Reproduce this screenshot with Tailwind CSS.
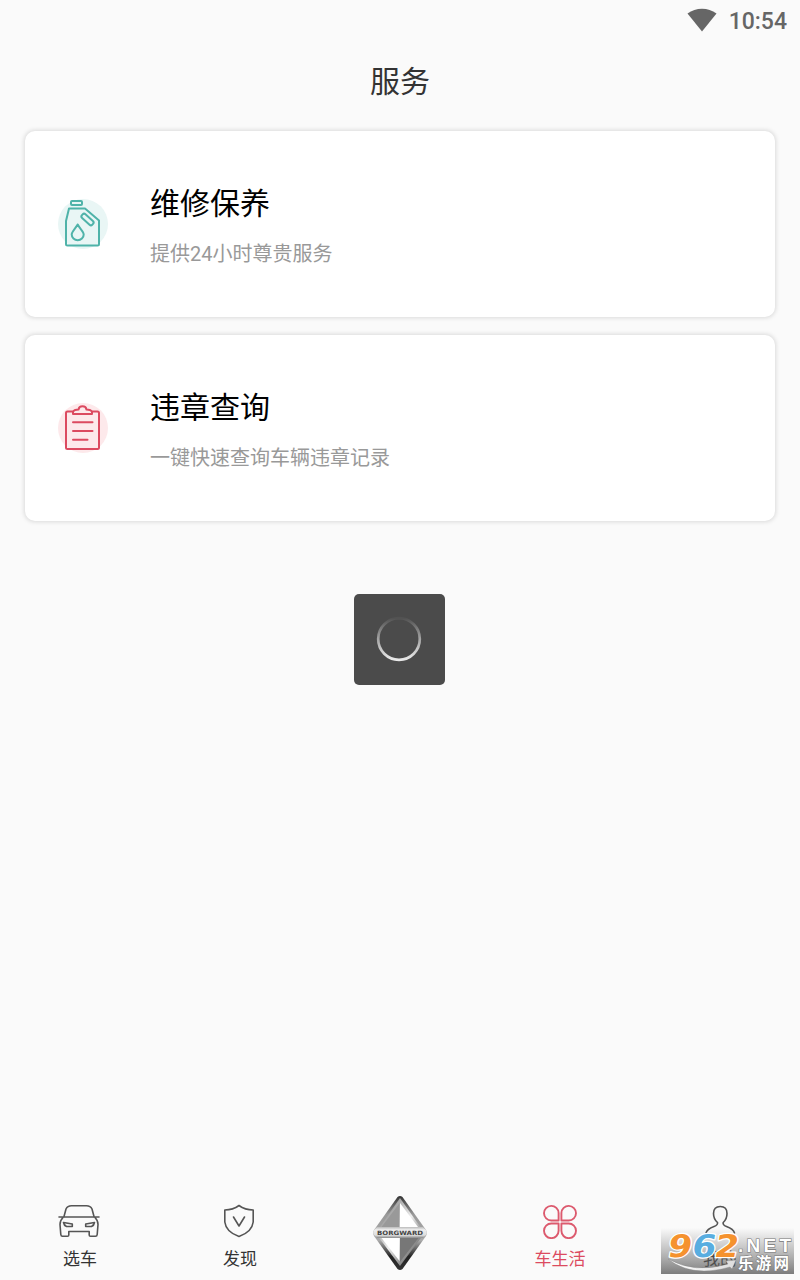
<!DOCTYPE html>
<html lang="zh-CN">
<head>
  <meta charset="UTF-8" />
  <meta name="viewport" content="width=device-width, initial-scale=1.0" />
  <title>服务</title>
  <script src="https://cdn.jsdelivr.net/npm/@tailwindcss/browser@4"></script>
</head>
<body class="bg-[#fafafa] font-[Roboto,'Noto_Sans_CJK_SC',sans-serif]">
  <div class="relative flex h-[1280px] w-[800px] flex-col overflow-hidden">

    <!-- Status bar -->
    <div class="flex h-[42px] items-center justify-end pr-[13px] text-[#666]">
      <svg class="mr-[12px] mb-[2px] h-6 w-[30px]" viewBox="0 0 30 24" fill="currentColor"><path d="M15 23.500L.5 5.500Q7 .8 15 .8T29.500 5.500z" /></svg>
      <span class="text-[23px] font-medium leading-none">10:54</span>
    </div>

    <h1 class="flex h-[78px] items-center justify-center text-[30px] text-[#333]">服务</h1>

    <main class="flex flex-col gap-[18px] px-[25px] pt-[11px]">
      <div class="flex h-[186px] items-center rounded-[10px] bg-white pl-[33px] shadow-[0_0_4px_1px_rgba(0,0,0,0.13)]">
        <svg class="h-[50px] w-[50px]" viewBox="0 0 50 50" fill="none" stroke="#4fb3a9" stroke-width="2" stroke-linejoin="round">
          <circle cx="25" cy="25" r="25" fill="#e9f6f5" stroke="none" />
          <rect x="13" y="2" width="11" height="4" rx="1" />
          <path d="M11 9.500H27L41 21.500V45Q41 46.500 39.500 46.500H9.500Q8 46.500 8 45V22z" />
          <rect x="-7" y="-2.500" width="14" height="5" rx="2" transform="translate(29.500 20.500) rotate(42)" />
          <path d="M19.700 25.500C17 30 13.700 32.500 13.700 35.500A6 5.700 0 0 0 25.700 35.500C25.700 32.500 22 30 19.700 25.500z" />
        </svg>
        <div class="ml-[42px] flex flex-col pt-[3px]">
          <h2 class="text-[30px] leading-[44px] text-black">维修保养</h2>
          <p class="mt-[13px] text-[20px] leading-[30px] text-[#999]">提供24小时尊贵服务</p>
        </div>
      </div>

      <div class="flex h-[186px] items-center rounded-[10px] bg-white pl-[33px] shadow-[0_0_4px_1px_rgba(0,0,0,0.13)]">
        <svg class="h-[50px] w-[50px]" viewBox="0 0 50 50" fill="none" stroke="#dc4a60" stroke-width="2" stroke-linejoin="round" stroke-linecap="round">
          <circle cx="25" cy="25" r="25" fill="#fde9eb" stroke="none" />
          <path d="M14.500 8.500H9.500Q8 8.500 8 10V44.500Q8 46 9.500 46H39.500Q41 46 41 44.500V10Q41 8.500 39.500 8.500H34.500" />
          <path d="M15 11H34V9Q33 6.500 28.500 6.500Q28 3.200 24.500 3.200T20.500 6.500Q16 6.500 15 9z" />
          <path d="M15 19.300H34.500M15 28H34.500M15 36.700H29.500" />
        </svg>
        <div class="ml-[42px] flex flex-col pt-[3px]">
          <h2 class="text-[30px] leading-[44px] text-black">违章查询</h2>
          <p class="mt-[13px] text-[20px] leading-[30px] text-[#999]">一键快速查询车辆违章记录</p>
        </div>
      </div>
    </main>

    <!-- Loading overlay -->
    <div class="absolute left-[354px] top-[594px] flex h-[91px] w-[91px] items-center justify-center rounded-[5px] bg-[#4b4b4b]">
      <svg class="mr-px mb-px h-[46px] w-[46px]" viewBox="0 0 46 46" fill="none">
        <defs>
          <linearGradient id="spin" x1="0" y1="0" x2="0" y2="1">
            <stop offset="0" stop-color="#fff" stop-opacity=".04" />
            <stop offset=".5" stop-color="#fff" stop-opacity=".5" />
            <stop offset="1" stop-color="#fff" stop-opacity=".88" />
          </linearGradient>
        </defs>
        <circle cx="23" cy="23" r="20.800" stroke="url(#spin)" stroke-width="2.700" />
      </svg>
    </div>

    <!-- Tab bar -->
    <nav class="mt-auto grid h-[90px] grid-cols-5 text-[17px] leading-[24px] text-[#333]">
      <a class="flex flex-col items-center pt-[14px]">
        <svg class="mr-[3px] h-[35px] w-[42px]" viewBox="0 0 42 35" fill="none" stroke="#555" stroke-width="1.600" stroke-linejoin="round" stroke-linecap="round">
          <path d="M6 12.500L8 5Q9.500 1.800 13.500 1.800H28.500Q32.500 1.800 34 5L36 12.500" />
          <path d="M1 13H41M5 13.500Q2 16.500 2 20.500L2.800 30.500Q3 32.300 4.500 32.300H9.500Q10.800 32.300 10.800 31V27.500H31.200V31Q31.200 32.300 32.500 32.300H37.500Q39 32.300 39.200 30.500L40 20.500Q40 16.500 37 13.500" />
          <path d="M5.500 18.500L14.300 20V22.500H8.500Q6 21.500 5.500 18.500zM36.500 18.500L27.700 20V22.500H33.500Q36 21.500 36.500 18.500z" />
        </svg>
        <span class="mt-[8px]">选车</span>
      </a>
      <a class="flex flex-col items-center pt-[14px]">
        <svg class="mr-[3px] h-[35px] w-[32px]" viewBox="0 0 32 35" fill="none" stroke="#555" stroke-width="1.600" stroke-linejoin="round" stroke-linecap="round">
          <path d="M16 1.500Q22 6 30.200 6V18Q29 28 16 32.500Q3 28 1.800 18V6Q10 6 16 1.500z" />
          <path d="M10.500 13L16 22L21.500 13" />
        </svg>
        <span class="mt-[8px]">发现</span>
      </a>
      <a class="flex flex-col items-center pt-[5px]">
        <svg class="mr-px h-[76px] w-[54px]" viewBox="0 0 54 76">
          <defs>
            <linearGradient id="rim" x1="0" y1="0" x2="1" y2="1">
              <stop offset="0" stop-color="#333" />
              <stop offset=".27" stop-color="#aaa" />
              <stop offset=".5" stop-color="#eee" />
              <stop offset=".75" stop-color="#888" />
              <stop offset="1" stop-color="#444" />
            </linearGradient>
            <linearGradient id="rimDark" x1="0" y1="0" x2="0" y2="1">
              <stop offset="0" stop-color="#333" />
              <stop offset=".25" stop-color="#999" />
              <stop offset=".6" stop-color="#aaa" />
              <stop offset=".82" stop-color="#222" />
              <stop offset="1" stop-color="#333" />
            </linearGradient>
            <linearGradient id="band" x1="0" y1="0" x2="0" y2="1">
              <stop offset="0" stop-color="#bbb" />
              <stop offset=".25" stop-color="#eee" />
              <stop offset=".75" stop-color="#ddd" />
              <stop offset="1" stop-color="#888" />
            </linearGradient>
          </defs>
          <path d="M24.500 2Q27 0 29.500 2L53 35Q54.500 38 53 41L29.500 74Q27 76 24.500 74L1 41Q-.5 38 1 35z" fill="url(#rimDark)" />
          <path d="M27 3L51.500 38L27 71L2.500 38z" fill="url(#rim)" />
          <path d="M26.500 8V32H8.500z" fill="#999" />
          <path d="M27 8L45 32H27z" fill="#fff" />
          <path d="M8.500 43H26.500V66z" fill="#fff" />
          <path d="M27 43H45.500L27 67z" fill="#777" />
          <path d="M4 32H50L53 35Q54.500 38 53 40L50 43H4L1 40Q-.5 38 1 35z" fill="url(#band)" />
          <text x="4" y="40" font-family="DejaVu Sans" font-size="6" font-weight="bold" fill="#444" textLength="46" lengthAdjust="spacingAndGlyphs">BORGWARD</text>
        </svg>
      </a>
      <a class="flex flex-col items-center pt-[14px] text-[#dc4a60]">
        <svg class="mr-px h-[35px] w-[34px]" viewBox="0 0 34 35" fill="none" stroke="#dc5a6e" stroke-width="1.900" stroke-linejoin="round">
          <path d="M15.600 16.500V9A7.300 7.300 0 1 0 8.300 16.500zM18.400 16.500V9A7.300 7.300 0 1 1 25.700 16.500zM15.600 19.500V26.800A7.300 7.300 0 1 1 8.300 19.500zM18.400 19.500V26.800A7.300 7.300 0 1 0 25.700 19.500z" />
        </svg>
        <span class="mt-[8px]">车生活</span>
      </a>
      <a class="flex flex-col items-center pt-[14px]">
        <svg class="h-[35px] w-[32px]" viewBox="0 0 32 35" fill="none" stroke="#555" stroke-width="1.600" stroke-linecap="round">
          <path d="M2 29Q3 25 10 22.500Q14 21 13.500 18.500Q9.500 15 9.500 9.500Q9.500 2.500 16.300 2.500T23 9.500Q23 15 19.200 18.500Q18.500 21 22.500 22.500Q29.500 25 30.500 29" />
        </svg>
        <span class="mt-[8px] text-[#111]">我的</span>
      </a>
    </nav>

    <!-- Site badge over the last tab -->
    <svg class="absolute left-[661px] top-[1228px] h-[46px] w-[133px]" viewBox="0 0 133 46">
      <defs>
        <linearGradient id="badge" x1="0" y1="0" x2="0" y2="1">
          <stop offset="0" stop-color="#777" stop-opacity="0" />
          <stop offset=".5" stop-color="#777" stop-opacity=".45" />
          <stop offset="1" stop-color="#666" stop-opacity=".85" />
        </linearGradient>
        <linearGradient id="swoosh" x1="0" y1="0" x2="1" y2="0">
          <stop offset="0" stop-color="#fff" />
          <stop offset="1" stop-color="#ddd" />
        </linearGradient>
      </defs>
      <rect width="133" height="46" fill="url(#badge)" />
      <path d="M7 31Q34 46 67 36L65 33L75 32L71 41L69 39Q31 50 7 31z" fill="url(#swoosh)" stroke="#888" stroke-width=".4" />
      <g font-family="DejaVu Sans" font-weight="bold" font-size="31" stroke="#fff" stroke-width="2.500" paint-order="stroke" stroke-linejoin="round" transform="translate(5.500 0) skewX(-10)">
        <text x="5" y="29" fill="#f5922e" textLength="24" lengthAdjust="spacingAndGlyphs">9</text>
        <text x="29" y="29" fill="#58ade0" textLength="24" lengthAdjust="spacingAndGlyphs">6</text>
        <text x="52" y="29" fill="#f5922e" textLength="24" lengthAdjust="spacingAndGlyphs">2</text>
      </g>
      <text x="77" y="24" font-family="Liberation Sans" font-weight="bold" font-size="19" fill="#fff" stroke="#777" stroke-width="1.200" paint-order="stroke" textLength="53" lengthAdjust="spacing">.NET</text>
      <text x="77" y="41" font-family="Noto Sans CJK SC" font-weight="bold" font-size="15.500" fill="#fff" stroke="#777" stroke-width="1" paint-order="stroke" textLength="51">乐游网</text>
    </svg>
  </div>
</body>
</html>
